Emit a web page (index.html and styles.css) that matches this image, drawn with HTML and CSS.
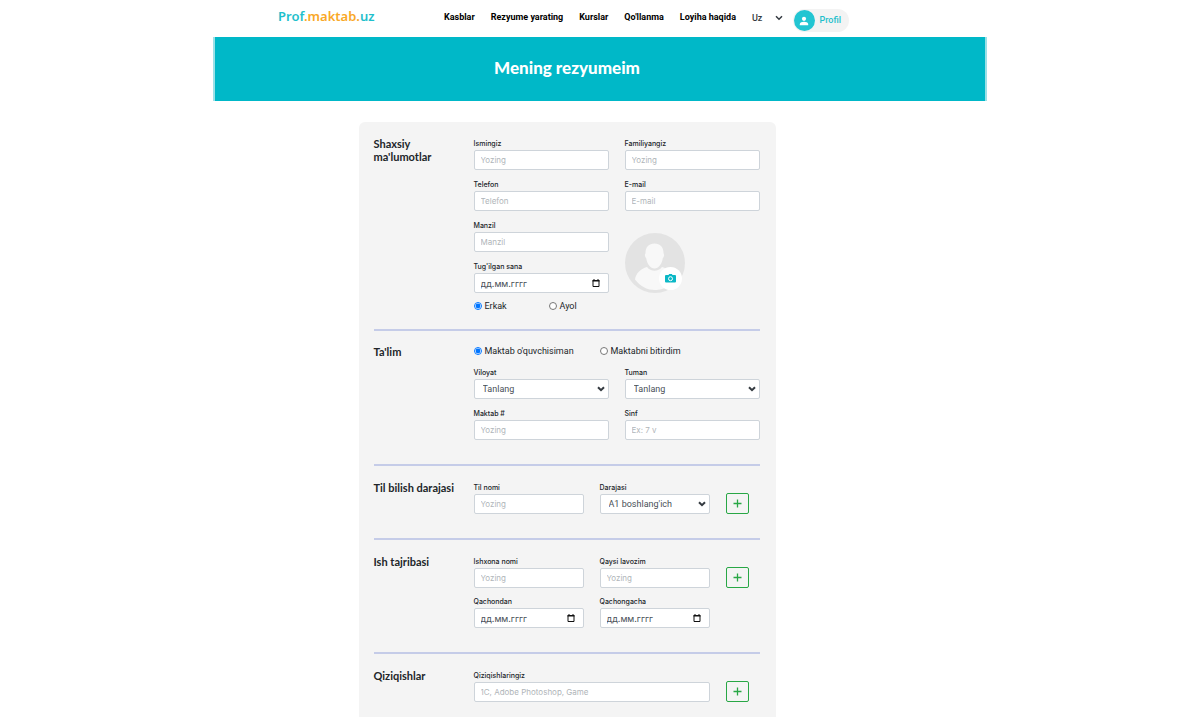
FILE: index.html
```html
<!DOCTYPE html>
<html lang="uz">
<head>
<meta charset="utf-8">
<title>Mening rezyumeim</title>
<meta name="viewport" content="width=device-width, initial-scale=1">
<link rel="stylesheet" href="styles.css">
</head>
<body>
<div class="page">
  <header class="header">
    <a class="logo" href="#">Prof<span class="logo-accent">.maktab.</span>uz</a>
    <nav class="nav">
      <a href="#">Kasblar</a>
      <a href="#">Rezyume yarating</a>
      <a href="#">Kurslar</a>
      <a href="#">Qo'llanma</a>
      <a href="#">Loyiha haqida</a>
      <span class="lang">
        <select class="lang-select" aria-label="Til"><option>Uz</option></select>
        <svg class="chevron" viewBox="0 0 8 6" aria-hidden="true"><path d="M1 1.2 4 4.2 7 1.2"/></svg>
      </span>
    </nav>
    <a class="profile" href="#">
      <span class="profile-icon"><svg viewBox="0 0 10 10" aria-hidden="true"><circle cx="5" cy="2.8" r="2.1"/><path d="M.8 9.2V8C.8 6.500 3 5.800 5 5.800S9.200 6.500 9.200 8v1.200z"/></svg></span>
      <span>Profil</span>
    </a>
  </header>
  <div class="banner"><h1>Mening rezyumeim</h1></div>
  <main class="main">
    <form class="card">
      <section class="section personal">
        <h2>Shaxsiy ma'lumotlar</h2>
        <div class="fields two">
          <div class="field"><label for="name">Ismingiz</label><input class="control" id="name" type="text" placeholder="Yozing"></div>
          <div class="field"><label for="surname">Familiyangiz</label><input class="control" id="surname" type="text" placeholder="Yozing"></div>
          <div class="field"><label for="phone">Telefon</label><input class="control" id="phone" type="tel" placeholder="Telefon"></div>
          <div class="field"><label for="email">E-mail</label><input class="control" id="email" type="email" placeholder="E-mail"></div>
          <div class="field"><label for="address">Manzil</label><input class="control" id="address" type="text" placeholder="Manzil"></div>
          <div class="avatar">
            <svg class="avatar-image" viewBox="0 0 60 60" aria-hidden="true"><circle cx="30" cy="30" r="30" fill="#e3e3e3"/><path fill="#f8f8f8" d="M29.500 10.500c5.500 0 9 3.500 9 9.500 0 .8.700 1 .6 2.300-.1 1.500-.8 2.400-1.300 2.900C37 31 33.500 35.500 29.500 35.500S22 31 21.200 25.200c-.5-.5-1.200-1.400-1.300-2.900-.1-1.300.6-1.500.6-2.300 0-6 3.500-9.500 9-9.500z"/><path fill="#f8f8f8" d="M22 34c2 2.500 4.500 3.800 7.500 3.800S35 36.500 37 34c6 2 11.500 5 12.500 13C44 54 37 57 30 57S15.500 54 10 46.500C11 39.500 16 36 22 34z"/></svg>
            <button class="avatar-button" type="button" aria-label="Rasm yuklash"><svg viewBox="0 0 11 9" aria-hidden="true"><path fill="#0bb8c6" d="M3.500 1 4.200 0h2.600l.7 1H10a1 1 0 0 1 1 1v5.500a1 1 0 0 1-1 1H1a1 1 0 0 1-1-1V2a1 1 0 0 1 1-1z"/><circle cx="5.500" cy="4.700" r="2" fill="none" stroke="#fff"/></svg></button>
          </div>
          <div class="field"><label for="birth">Tug'ilgan sana</label><div class="control date"><input id="birth" type="text" placeholder="дд.мм.гггг"><svg viewBox="0 0 8 8" aria-hidden="true"><path d="M1 1.500h6v6H1z"/><path class="date-top" d="M.5 1h7v1.500h-7zM1.500 0h1v1h-1zM5.500 0h1v1h-1z"/></svg></div></div>
        </div>
        <div class="radios narrow">
          <label><input type="radio" name="gender" checked>Erkak</label>
          <label><input type="radio" name="gender">Ayol</label>
        </div>
      </section>

      <section class="section education">
        <h2>Ta'lim</h2>
        <div class="radios wide">
          <label><input type="radio" name="school" checked>Maktab o'quvchisiman</label>
          <label><input type="radio" name="school">Maktabni bitirdim</label>
        </div>
        <div class="fields two">
          <div class="field"><label for="region">Viloyat</label><div class="select"><select class="control" id="region"><option>Tanlang</option></select><svg class="chevron" viewBox="0 0 8 6" aria-hidden="true"><path d="M1 1.200 4 4.200 7 1.200"/></svg></div></div>
          <div class="field"><label for="district">Tuman</label><div class="select"><select class="control" id="district"><option>Tanlang</option></select><svg class="chevron" viewBox="0 0 8 6" aria-hidden="true"><path d="M1 1.200 4 4.200 7 1.200"/></svg></div></div>
          <div class="field"><label for="school-no">Maktab #</label><input class="control" id="school-no" type="text" placeholder="Yozing"></div>
          <div class="field"><label for="grade">Sinf</label><input class="control" id="grade" type="text" placeholder="Ex: 7 v"></div>
        </div>
      </section>

      <section class="section">
        <h2>Til bilish darajasi</h2>
        <div class="fields three">
          <div class="field"><label for="language">Til nomi</label><input class="control" id="language" type="text" placeholder="Yozing"></div>
          <div class="field"><label for="level">Darajasi</label><div class="select"><select class="control" id="level"><option>A1 boshlang'ich</option></select><svg class="chevron" viewBox="0 0 8 6" aria-hidden="true"><path d="M1 1.200 4 4.200 7 1.200"/></svg></div></div>
          <button class="add" type="button" aria-label="Til qo'shish"><svg viewBox="0 0 9 9" aria-hidden="true"><path d="M4.500.5v8M.5 4.500h8"/></svg></button>
        </div>
      </section>

      <section class="section">
        <h2>Ish tajribasi</h2>
        <div class="fields three work">
          <div class="field"><label for="company">Ishxona nomi</label><input class="control" id="company" type="text" placeholder="Yozing"></div>
          <div class="field"><label for="position">Qaysi lavozim</label><input class="control" id="position" type="text" placeholder="Yozing"></div>
          <button class="add" type="button" aria-label="Ish joyi qo'shish"><svg viewBox="0 0 9 9" aria-hidden="true"><path d="M4.500.5v8M.5 4.500h8"/></svg></button>
          <div class="field"><label for="from">Qachondan</label><div class="control date"><input id="from" type="text" placeholder="дд.мм.гггг"><svg viewBox="0 0 8 8" aria-hidden="true"><path d="M1 1.500h6v6H1z"/><path class="date-top" d="M.5 1h7v1.500h-7zM1.500 0h1v1h-1zM5.500 0h1v1h-1z"/></svg></div></div>
          <div class="field"><label for="until">Qachongacha</label><div class="control date"><input id="until" type="text" placeholder="дд.мм.гггг"><svg viewBox="0 0 8 8" aria-hidden="true"><path d="M1 1.500h6v6H1z"/><path class="date-top" d="M.5 1h7v1.500h-7zM1.500 0h1v1h-1zM5.500 0h1v1h-1z"/></svg></div></div>
        </div>
      </section>

      <section class="section interests">
        <h2>Qiziqishlar</h2>
        <div class="fields three">
          <div class="field span"><label for="interests">Qiziqishlaringiz</label><input class="control" id="interests" type="text" placeholder="1C, Adobe Photoshop, Game"></div>
          <button class="add" type="button" aria-label="Qiziqish qo'shish"><svg viewBox="0 0 9 9" aria-hidden="true"><path d="M4.500.5v8M.5 4.500h8"/></svg></button>
        </div>
      </section>
    </form>
  </main>
</div>
</body>
</html>
```
FILE: styles.css
```css
* { box-sizing: border-box; }
body { margin: 0; background: #fff; color: #212529; font-family: Inter, "Liberation Sans", sans-serif; font-size: 8px; }
a { color: inherit; text-decoration: none; }
h1, h2 { margin: 0; font-family: Lato, "Noto Sans", sans-serif; }
input, select, button { font: inherit; color: inherit; margin: 0; }
svg { display: block; }

.page { max-width: 774px; margin: 0 auto; }

.header { display: flex; align-items: flex-start; min-height: 37px; padding: 0 138px 0 65px; }
.logo { flex: none; width: 166px; padding-top: 6px; color: #1fc0cc; font: 600 13px/20px "Noto Sans", sans-serif; }
.logo-accent { color: #f9a826; }
.nav { display: flex; gap: 16px; padding-top: 10px; color: #000; font-family: Roboto, sans-serif; font-size: 9px; font-weight: 700; line-height: 14px; white-space: nowrap; }
.lang { position: relative; width: 31px; color: #343a40; font-weight: 500; }
.lang-select { display: block; width: 100%; height: 16px; padding: 0; border: 0; background: none; appearance: none; }
.chevron { position: absolute; right: 4px; top: 7px; width: 8px; height: 6px; fill: none; stroke: #343a40; stroke-width: 2; pointer-events: none; }
.lang .chevron { right: 0; top: 5px; stroke-width: 1.5; }
.profile { display: flex; align-items: center; gap: 5px; margin: 9px 0 0 auto; padding: 1px 8px 1px 1px; border-radius: 12px; background: #f3f3f3; color: #1fc0cc; font-family: Roboto, sans-serif; font-size: 9px; font-weight: 500; line-height: 21px; }
.profile-icon { display: grid; place-items: center; width: 21px; height: 21px; border-radius: 50%; background: #22c5d2; }
.profile-icon svg { width: 10px; height: 10px; fill: #fff; }

.banner { padding: 19px 66px 21px 0; border: solid #9be1e7; border-width: 0 2px; background: #00b8c8; color: #fff; text-align: center; }
.banner h1 { font-size: 17px; font-weight: 900; line-height: 24px; }

.main { padding: 21px 66px 3px 0; }
.card { max-width: 417px; margin: 0 auto; padding: 0 16px 0 15px; border-radius: 6px 6px 0 0; background: #f4f4f4; }
.section { display: grid; grid-template-columns: 100px minmax(0, 1fr); padding: 15px 0 24px; border-top: 2px solid #c5cce8; }
.section > :not(h2) { grid-column: 2; }
.section h2 { padding-right: 16px; font-size: 11px; font-weight: 700; line-height: 13px; grid-row: 1 / span 2; }
.personal { padding-bottom: 15px; border-top: 0; }
.education { padding-top: 12px; row-gap: 7px; }
.education h2 { padding-top: 2px; }
.interests { padding-bottom: 15px; }

.fields { display: grid; gap: 8px 16px; align-items: end; }
.two { grid-template-columns: repeat(2, minmax(0, 1fr)); }
.three { grid-template-columns: repeat(2, minmax(0, 1fr)) 34px; }
.work { row-gap: 7px; }
.span { grid-column: span 2; }
.field label { display: block; font-size: 7px; font-weight: 500; line-height: 13px; }
.control { display: block; width: 100%; height: 20px; padding: 0 6px; border: 1px solid #ced4da; border-radius: 2px; background: #fff; font-size: 8px; color: #495057; }
.control::placeholder { color: #b0b5b9; opacity: 1; }
.select { position: relative; }
select.control { padding: 0 8px; font-family: Roboto, sans-serif; font-size: 9px; appearance: none; }
.date { display: flex; align-items: center; padding-right: 8px; }
.date input { flex: 1; min-width: 0; padding: 0; border: 0; background: none; font-size: 9px; }
.date input::placeholder { color: #495057; opacity: 1; }
.date svg { width: 8px; height: 8px; fill: none; stroke: #111; }
.date .date-top { fill: #111; stroke: none; }

.radios { display: grid; font-family: Roboto, sans-serif; font-size: 9px; line-height: 16px; }
.radios label { display: flex; align-items: center; gap: 3px; }
.radios input { width: 8px; height: 8px; }
.narrow { grid-template-columns: 75px 1fr; margin-top: 5px; }
.wide { grid-template-columns: 126px 1fr; }

.avatar { position: relative; grid-row: 3 / span 2; grid-column: 2; align-self: end; width: 60px; height: 60px; }
.avatar-image { width: 60px; height: 60px; }
.avatar-button { position: absolute; right: 3px; bottom: 3px; display: grid; place-items: center; width: 23px; height: 23px; padding: 0; border: 0; border-radius: 50%; background: #fff; }
.avatar-button svg { width: 11px; height: 9px; }

.add { display: grid; place-items: center; width: 23px; height: 21px; padding: 0; border: 1px solid #28a745; border-radius: 2px; background: none; }
.add svg { width: 9px; height: 9px; stroke: #28a745; stroke-width: 1.3; }
```
